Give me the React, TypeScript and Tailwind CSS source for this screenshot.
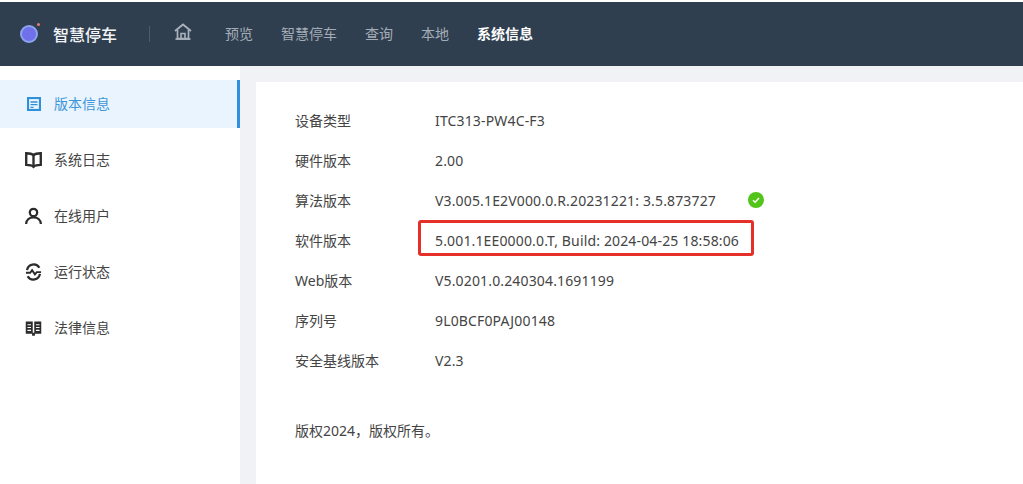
import type { ReactNode } from 'react';

const font = "font-['Noto_Sans','Noto_Sans_CJK_SC',sans-serif]";

const topLinks = ['预览', '智慧停车', '查询', '本地'];

const infoRows = [
  { label: '设备类型', value: 'ITC313-PW4C-F3' },
  { label: '硬件版本', value: '2.00' },
  { label: '算法版本', value: 'V3.005.1E2V000.0.R.20231221: 3.5.873727', ok: true },
  { label: '软件版本', value: '5.001.1EE0000.0.T, Build: 2024-04-25 18:58:06', marked: true },
  { label: 'Web版本', value: 'V5.0201.0.240304.1691199' },
  { label: '序列号', value: '9L0BCF0PAJ00148' },
  { label: '安全基线版本', value: 'V2.3' },
];

function HomeIcon() {
  return (
    <svg viewBox="0 0 18 18" className="h-[18px] w-[18px] text-[#aab2bc]" fill="none" stroke="currentColor">
      <path d="M1 8 9 1.5 17 8" strokeWidth="1.8" />
      <path d="M3.5 7v8.6h11V7" strokeWidth="1.7" />
      <path d="M1.5 16h15" strokeWidth="1.8" />
      <path d="M7 15.5V10.5h4v5" strokeWidth="1.6" />
    </svg>
  );
}

function InfoIcon() {
  return (
    <svg viewBox="0 0 14 14" className="h-[14px] w-[14px] text-[#2f8fd8]" fill="none" stroke="currentColor" strokeWidth="2.2">
      <rect x="1" y="1" width="12" height="12" />
      <path d="M3.5 5h7M3.5 7.600h7M3.500 10.400h3" strokeWidth="1.400" />
    </svg>
  );
}

function BookIcon() {
  return (
    <svg viewBox="0 0 18 18" className="h-[18px] w-[18px] text-[#2c2c2c]" fill="none" stroke="currentColor" strokeWidth="2.500">
      <path d="M9 3.800C7.500 2.400 5 1.800 1.300 1.800v12.400c3.700 0 6.100.4 7.700 2 1.600-1.600 4-2 7.700-2V1.800C13 1.800 10.500 2.400 9 3.800Z" />
      <path d="M9 3.800v12" />
    </svg>
  );
}

function UserIcon() {
  return (
    <svg viewBox="0 0 18 18" className="h-[18px] w-[18px] text-[#2c2c2c]" fill="none" stroke="currentColor" strokeWidth="2.400">
      <circle cx="9" cy="5.300" r="3.900" />
      <path d="M1.200 17.500c.2-4.300 3.500-7 7.800-7s7.600 2.700 7.800 7" />
    </svg>
  );
}

function StatusIcon() {
  return (
    <svg viewBox="0 0 18 18" className="h-[18px] w-[18px] text-[#2c2c2c]" fill="none" stroke="currentColor" strokeWidth="2.400">
      <path d="M2.200 7A7 7 0 0 1 15.200 4.500" />
      <path d="M15.800 11A7 7 0 0 1 2.800 13.500" />
      <path d="M1 9.800h4.500L7.500 7l3 4.500 2-2.400H17" strokeWidth="2" />
    </svg>
  );
}

function LawIcon() {
  return (
    <svg viewBox="0 0 18 18" className="h-[18px] w-[18px] text-[#2c2c2c]" fill="currentColor">
      <path d="M.8 2h7.400v13H.8V2Zm9 0h7.400v13H9.800V2Z" />
      <path d="M7.500 14h3v3.200h-3z" />
      <path d="M2.600 5.500h3.800M2.600 8.500h3.800M2.600 11.500h3.800M11.600 5.500h3.800M11.600 8.500h3.800M11.600 11.500h3.800" stroke="#fff" strokeWidth="1.200" />
    </svg>
  );
}

function SideItem({ icon, label, active }: { icon: ReactNode; label: string; active?: boolean }) {
  return (
    <div
      className={
        active
          ? 'flex h-12 items-center gap-[12px] border-r-[3px] border-[#2f8fe0] bg-[#e9f4fe] pl-[25px] text-[#3f96d8]'
          : 'flex h-12 items-center gap-[12px] pl-[25px] text-[#444]'
      }
    >
      <span className="flex w-[17px] justify-center">{icon}</span>
      <span className="text-[14px] leading-5">{label}</span>
    </div>
  );
}

function InfoRow({ label, value, ok, marked }: { label: string; value: string; ok?: boolean; marked?: boolean }) {
  return (
    <div className="flex h-10 items-center text-[14px] text-[#444]">
      <span className="w-[140px] shrink-0">{label}</span>
      <span className="relative whitespace-nowrap tracking-[0.15px]">
        {value}
        {marked && (
          <span className="absolute left-[-17px] right-[-15px] top-[-10px] bottom-[-5px] rounded-[3px] border-[3px] border-[#e5302a]" />
        )}
      </span>
      {ok && (
        <span className="ml-[32px] flex h-4 w-4 items-center justify-center rounded-full bg-[#52c41a]">
          <svg viewBox="0 0 10 10" className="h-[10px] w-[10px]" fill="none" stroke="#fff" strokeWidth="1.500">
            <path d="M2 5.200 4.200 7.200 8 3" />
          </svg>
        </span>
      )}
    </div>
  );
}

export default function App() {
  return (
    <div className={`${font} flex h-[484px] w-[1023px] flex-col overflow-hidden bg-white`}>
      <header className="mt-[2px] flex h-[64px] shrink-0 items-center bg-[#303f50]">
        <div className="relative ml-[20px] h-[18px] w-[18px] rounded-full border-[2px] border-[#8aa4ee] bg-[#6f70ea]">
          <span className="absolute right-[-4px] top-[-4px] h-[3px] w-[3px] rounded-full bg-[#e87a70]" />
        </div>
        <span className="ml-[15px] translate-y-px text-[16px] font-medium leading-6 text-[#f2f4f6]">智慧停车</span>
        <span className="ml-[32px] h-4 w-px bg-[#4f5c6b]" />
        <span className="ml-[24px] -translate-y-[2px]">
          <HomeIcon />
        </span>
        <nav className="ml-[33px] flex -translate-y-px items-center gap-[28px] text-[14px] text-[#a4adb7]">
          {topLinks.map((link) => (
            <span key={link}>{link}</span>
          ))}
          <span className="font-bold text-white">系统信息</span>
        </nav>
      </header>
      <div className="flex min-h-0 flex-1 bg-[#f0f2f5]">
        <aside className="w-[240px] shrink-0 bg-white pt-[14px]">
          <div className="flex flex-col gap-2">
            <SideItem active icon={<InfoIcon />} label="版本信息" />
            <SideItem icon={<BookIcon />} label="系统日志" />
            <SideItem icon={<UserIcon />} label="在线用户" />
            <SideItem icon={<StatusIcon />} label="运行状态" />
            <SideItem icon={<LawIcon />} label="法律信息" />
          </div>
        </aside>
        <main className="mt-4 ml-4 flex-1 bg-white pl-[39px] pt-[18px]">
          {infoRows.map((row) => (
            <InfoRow key={row.label} {...row} />
          ))}
          <p className="mt-[41px] text-[14px] leading-5 text-[#444]">版权2024，版权所有。</p>
        </main>
      </div>
    </div>
  );
}
